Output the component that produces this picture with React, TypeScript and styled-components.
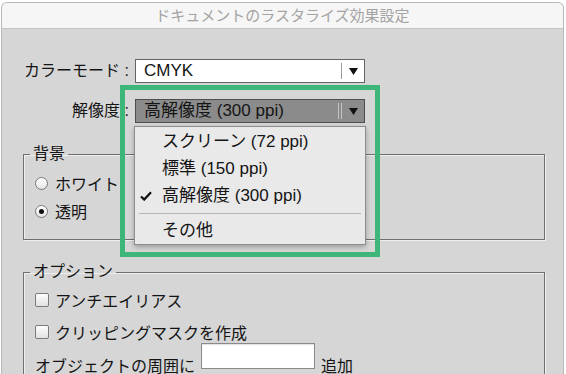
import React from "react"
import styled, { createGlobalStyle } from "styled-components"

const GlobalStyle = createGlobalStyle`
  html, body {
    margin: 0;
    padding: 0;
    background: #ffffff;
  }
  body {
    font-family: "Liberation Sans", "Noto Sans CJK JP", sans-serif;
    color: #141414;
  }
`

const WindowTag = styled.div`
  position: relative;
  box-sizing: border-box;
  width: 563px;
  height: 372px;
  margin: 2px 0 0 1px;
  border: 1px solid #b9b9b9;
  border-bottom: none;
  border-radius: 6px 6px 0 0;
  background: #d6d6d6;
  overflow: hidden;
`

const TitleBarTag = styled.div`
  height: 25px;
  line-height: 25px;
  background: #f6f6f6;
  border-bottom: 1px solid #c4c4c4;
  text-align: center;
  font-size: 15px;
  color: #a3a3a3;
`

const SettingsTag = styled.div`
  display: grid;
  grid-template-columns: 127px 230px;
  column-gap: 6px;
  row-gap: 16px;
  align-items: center;
  padding-top: 30px;
`

const LabelTag = styled.div`
  text-align: right;
  font-size: 16px;
  line-height: 24px;
  white-space: nowrap;
`

const SelectTag = styled.div<{ $open?: boolean }>`
  position: relative;
  display: flex;
  align-items: center;
  box-sizing: border-box;
  height: 24px;
  padding-left: 8px;
  border: 1px solid ${(p) => (p.$open ? "#4e4e4e" : "#646464")};
  background: ${(p) => (p.$open ? "#8b8b8b" : "#ffffff")};
  font-size: 17px;
`

const SelectValue = styled.span`
  flex: 1;
  line-height: 22px;
  white-space: nowrap;
`

const Divider = styled.span<{ $double?: boolean }>`
  box-sizing: border-box;
  height: 16px;
  width: ${(p) => (p.$double ? "4px" : "1px")};
  border-left: 1px solid ${(p) => (p.$double ? "#c4c4c4" : "#9a9a9a")};
  border-right: ${(p) => (p.$double ? "1px solid #c4c4c4" : "none")};
`

const ArrowTag = styled.span`
  display: flex;
  justify-content: center;
  align-items: center;
  width: 22px;
`

const MenuTag = styled.div`
  position: absolute;
  top: 26px;
  left: -2px;
  width: 232px;
  box-sizing: border-box;
  padding-top: 1px;
  background: #e9e9e9;
  border: 1px solid #8d8d8d;
  box-shadow: 0 2px 5px rgba(0, 0, 0, 0.28);
  z-index: 2;
`

const MenuItem = styled.div`
  position: relative;
  height: 27px;
  line-height: 27px;
  padding-left: 27px;
  font-size: 17px;
  white-space: nowrap;
`

const CheckMark = styled.svg`
  position: absolute;
  left: 5px;
  top: 9px;
`

const MenuSeparator = styled.div`
  height: 1px;
  margin: 4px 4px 3px;
  background: #b4b4b4;
`

const GroupBox = styled.fieldset<{ $gap: number }>`
  margin: ${(p) => p.$gap}px 18px 0 21px;
  padding: ${(p) => (p.$gap > 21 ? "2px 0 0" : "5px 0 14px")};
  border: 1px solid #6f6f6f;
  box-shadow: inset 1px 1px 0 #eeeeee, 1px 1px 0 #eeeeee;
  min-width: 0;
`

const GroupTitle = styled.legend`
  margin-left: 6px;
  padding: 0 3px;
  font-size: 16px;
  line-height: 20px;
`

const OptionRow = styled.div<{ $height: number }>`
  display: flex;
  align-items: center;
  gap: 6px;
  height: ${(p) => p.$height}px;
  padding-left: 11px;
  font-size: 16px;
  white-space: nowrap;
`

const RadioTag = styled.span<{ $checked?: boolean }>`
  position: relative;
  box-sizing: border-box;
  width: 13px;
  height: 13px;
  margin-right: 1px;
  border: 1px solid #7a7a7a;
  border-radius: 50%;
  background: linear-gradient(#ffffff, #e6e6e6);
  &::after {
    content: "";
    display: ${(p) => (p.$checked ? "block" : "none")};
    position: absolute;
    left: 3px;
    top: 3px;
    width: 5px;
    height: 5px;
    border-radius: 50%;
    background: #111;
  }
`

const CheckboxTag = styled.span`
  box-sizing: border-box;
  width: 14px;
  height: 14px;
  border: 1px solid #7b7b7b;
  border-radius: 2px;
  background: linear-gradient(#fdfdfd, #e2e2e2);
`

const PaddingRow = styled.div`
  display: flex;
  align-items: flex-start;
  gap: 6px;
  padding-left: 11px;
  font-size: 16px;
  white-space: nowrap;
  span {
    line-height: 20px;
    padding-top: 9px;
  }
`

const PaddingInput = styled.div`
  box-sizing: border-box;
  width: 114px;
  height: 26px;
  margin-top: -5px;
  background: #ffffff;
  border: 1px solid #8a8a8a;
  box-shadow: inset 0 1px 1px rgba(0, 0, 0, 0.12);
`

const HighlightTag = styled.div`
  position: absolute;
  left: 118px;
  top: 82px;
  width: 260px;
  height: 172px;
  box-sizing: border-box;
  border: 5px solid #3cb679;
  pointer-events: none;
  z-index: 3;
`

const Arrow = () => (
  <svg width="9" height="7" viewBox="0 0 9 7">
    <polygon points="0,0 9,0 4.5,7" fill="#111" />
  </svg>
)

const resolutions = ["スクリーン (72 ppi)", "標準 (150 ppi)", "高解像度 (300 ppi)"]

const App = (): React.ReactElement => {
  const selected = 2
  return (
    <>
      <GlobalStyle />
      <WindowTag>
        <TitleBarTag>ドキュメントのラスタライズ効果設定</TitleBarTag>
        <SettingsTag>
          <LabelTag>カラーモード :</LabelTag>
          <SelectTag>
            <SelectValue>CMYK</SelectValue>
            <Divider />
            <ArrowTag>
              <Arrow />
            </ArrowTag>
          </SelectTag>
          <LabelTag>解像度 :</LabelTag>
          <SelectTag $open>
            <SelectValue>{resolutions[selected]}</SelectValue>
            <Divider $double />
            <ArrowTag>
              <Arrow />
            </ArrowTag>
            <MenuTag>
              {resolutions.map((r, i) => (
                <MenuItem key={r}>
                  {i === selected && (
                    <CheckMark width="12" height="10" viewBox="0 0 12 10">
                      <path d="M1 5.5 L4.2 8.6 L11 1.2" fill="none" stroke="#111" strokeWidth="2.2" />
                    </CheckMark>
                  )}
                  {r}
                </MenuItem>
              ))}
              <MenuSeparator />
              <MenuItem>その他</MenuItem>
            </MenuTag>
          </SelectTag>
        </SettingsTag>

        <GroupBox $gap={21}>
          <GroupTitle>背景</GroupTitle>
          <OptionRow $height={28}>
            <RadioTag />
            ホワイト
          </OptionRow>
          <OptionRow $height={28}>
            <RadioTag $checked />
            透明
          </OptionRow>
        </GroupBox>

        <GroupBox $gap={22}>
          <GroupTitle>オプション</GroupTitle>
          <OptionRow $height={32}>
            <CheckboxTag />
            アンチエイリアス
          </OptionRow>
          <OptionRow $height={32}>
            <CheckboxTag />
            クリッピングマスクを作成
          </OptionRow>
          <PaddingRow>
            <span>オブジェクトの周囲に</span>
            <PaddingInput />
            <span>追加</span>
          </PaddingRow>
        </GroupBox>

        <HighlightTag />
      </WindowTag>
    </>
  )
}

export default App
